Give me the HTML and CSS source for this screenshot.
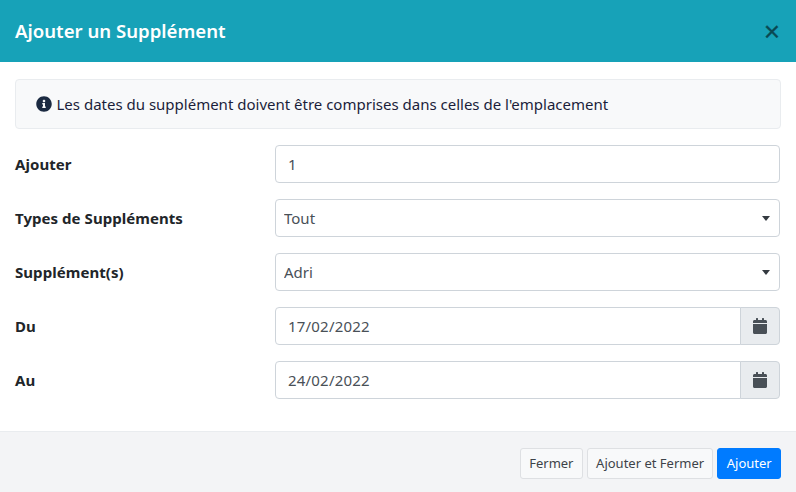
FILE: index.html
```html
<!DOCTYPE html>
<html lang="fr">
<head>
<meta charset="utf-8">
<title>Ajouter un Supplément</title>
<link rel="stylesheet" href="styles.css">
</head>
<body>
<div class="modal">
  <header class="modal-header">
    <h5 class="modal-title">Ajouter un Supplément</h5>
    <button class="close" type="button" aria-label="Fermer">×</button>
  </header>
  <main class="modal-body">
    <div class="alert">
      <svg class="info-icon" viewBox="0 0 512 512" aria-hidden="true"><path d="M256 8C119 8 8 119 8 256s111 248 248 248 248-111 248-248S393 8 256 8zm0 110c23.200 0 42 18.800 42 42s-18.800 42-42 42-42-18.800-42-42 18.800-42 42-42zm56 254c0 6.600-5.400 12-12 12h-88c-6.600 0-12-5.400-12-12v-24c0-6.600 5.400-12 12-12h12v-64h-12c-6.600 0-12-5.400-12-12v-24c0-6.600 5.400-12 12-12h64c6.600 0 12 5.400 12 12v100h12c6.600 0 12 5.400 12 12v24z"/></svg>
      <span>Les dates du supplément doivent être comprises dans celles de l'emplacement</span>
    </div>
    <div class="form-row">
      <label class="form-label">Ajouter</label>
      <input class="form-control" type="text" value="1">
    </div>
    <div class="form-row">
      <label class="form-label">Types de Suppléments</label>
      <select class="form-select"><option>Tout</option></select>
    </div>
    <div class="form-row">
      <label class="form-label">Supplément(s)</label>
      <select class="form-select"><option>Adri</option></select>
    </div>
    <div class="form-row">
      <label class="form-label">Du</label>
      <div class="input-group">
        <input class="form-control group-input" type="text" value="17/02/2022">
        <span class="group-addon"><svg class="cal-icon" viewBox="0 0 448 512" aria-hidden="true"><path d="M0 464c0 26.500 21.500 48 48 48h352c26.500 0 48-21.500 48-48V192H0v272zM400 64h-48V16c0-8.800-7.200-16-16-16h-32c-8.800 0-16 7.200-16 16v48H160V16c0-8.800-7.200-16-16-16h-32c-8.800 0-16 7.200-16 16v48H48C21.500 64 0 85.500 0 112v48h448v-48c0-26.500-21.500-48-48-48z"/></svg></span>
      </div>
    </div>
    <div class="form-row">
      <label class="form-label">Au</label>
      <div class="input-group">
        <input class="form-control group-input" type="text" value="24/02/2022">
        <span class="group-addon"><svg class="cal-icon" viewBox="0 0 448 512" aria-hidden="true"><path d="M0 464c0 26.500 21.500 48 48 48h352c26.500 0 48-21.500 48-48V192H0v272zM400 64h-48V16c0-8.800-7.200-16-16-16h-32c-8.800 0-16 7.200-16 16v48H160V16c0-8.800-7.200-16-16-16h-32c-8.800 0-16 7.200-16 16v48H48C21.500 64 0 85.500 0 112v48h448v-48c0-26.500-21.500-48-48-48z"/></svg></span>
      </div>
    </div>
  </main>
  <footer class="modal-footer">
    <button class="btn btn-light" type="button">Fermer</button>
    <button class="btn btn-light" type="button">Ajouter et Fermer</button>
    <button class="btn btn-primary" type="button">Ajouter</button>
  </footer>
</div>
</body>
</html>
```
FILE: styles.css
```css
* {
  box-sizing: border-box;
}

html, body {
  margin: 0;
  height: 100%;
}

body {
  background: #fff;
  color: #212529;
  font-family: "Noto Sans", "Open Sans", sans-serif;
  font-size: 15px;
  line-height: 24px;
}

.modal {
  display: flex;
  flex-direction: column;
  height: 492px;
  overflow: hidden;
}

.modal-header {
  flex: 0 0 62px;
  display: flex;
  align-items: center;
  justify-content: space-between;
  padding: 0 16px 0 15px;
  background: #17a2b8;
  color: #fff;
}

.modal-title {
  margin: 0;
  font-size: 18.6px;
  font-weight: 600;
  line-height: 24px;
}

.close {
  border: 0;
  padding: 2px 0 0;
  background: none;
  color: #000;
  opacity: 0.55;
  font-family: "Liberation Sans", sans-serif;
  font-size: 28px;
  font-weight: 400;
  line-height: 24px;
  -webkit-text-stroke: 0.3px #000;
}

.modal-body {
  flex: 1;
  padding: 17px 15px 0;
}

.alert {
  display: flex;
  align-items: center;
  gap: 4.5px;
  height: 50px;
  margin-bottom: 16px;
  padding: 0 20px;
  border: 1px solid #e9ecef;
  border-radius: 4px;
  background: #f8f9fa;
  color: #1b1e3a;
}

.info-icon {
  width: 16px;
  height: 16px;
  fill: #1b2a41;
  flex: none;
}

.form-row {
  display: flex;
  align-items: center;
  height: 38px;
  margin: 0 1px 16px 0;
}

.form-label {
  flex: 0 0 260px;
  font-weight: 700;
  letter-spacing: 0.05px;
}

.form-control,
.form-select {
  flex: 1;
  min-width: 0;
  height: 38px;
  border: 1px solid #ced4da;
  border-radius: 4px;
  background-color: #fff;
  color: #495057;
  font: inherit;
}

.form-control {
  padding: 0 12px;
  letter-spacing: 0.2px;
}

.form-select {
  appearance: none;
  padding: 0 24px 0 8px;
  background-image: url("data:image/svg+xml,%3Csvg xmlns='http://www.w3.org/2000/svg' viewBox='0 0 8 5'%3E%3Cpath fill='%23343a40' d='M0 0h8L4 5z'/%3E%3C/svg%3E");
  background-repeat: no-repeat;
  background-position: right 9px center;
  background-size: 8px 5px;
}

.input-group {
  flex: 1;
  display: flex;
  min-width: 0;
}

.group-input {
  border-radius: 4px 0 0 4px;
}

.group-addon {
  flex: 0 0 40px;
  display: flex;
  align-items: center;
  justify-content: center;
  height: 38px;
  margin-left: -1px;
  border: 1px solid #ced4da;
  border-radius: 0 4px 4px 0;
  background: #e9ecef;
}

.cal-icon {
  width: 14px;
  height: 16px;
  fill: #495057;
}

.modal-footer {
  flex: 0 0 61px;
  display: flex;
  align-items: center;
  justify-content: flex-end;
  gap: 4px;
  padding: 2px 15px 0;
  border-top: 1px solid #e9ecef;
  background: #f3f4f6;
}

.btn {
  height: 31px;
  padding: 0 8.3px;
  border: 1px solid transparent;
  border-radius: 3px;
  font: inherit;
  font-size: 13px;
}

.btn-light {
  border-color: #dee0e3;
  background: #f8f9fa;
  color: #3d4349;
}

.btn-primary {
  border-color: #007bff;
  background: #007bff;
  color: #fff;
}
```
